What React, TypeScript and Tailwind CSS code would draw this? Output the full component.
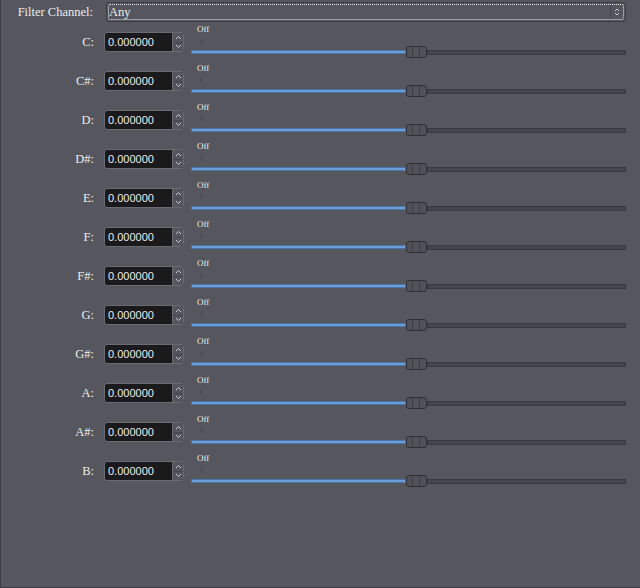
import React from "react";

const notes = ["C", "C#", "D", "D#", "E", "F", "F#", "G", "G#", "A", "A#", "B"];

function SpinBox() {
  return (
    <div className="flex h-[20px] w-[80px] overflow-hidden rounded-[3px] border border-[#6a6b72] bg-[#1a1a1c]">
      <div className="flex flex-1 items-center pl-[3px] text-[11px] leading-none text-[#ececec]" style={{ fontFamily: '"Liberation Sans", Arial, sans-serif' }}>
        0.000000
      </div>
      <div className="flex w-[11px] flex-col border-l border-[#6a6b72] bg-[#55565d]">
        <div className="flex flex-1 items-center justify-center border-b border-[#45464c]">
          <svg width="7" height="5" viewBox="0 0 7 5">
            <path d="M1 4 L3.5 1.5 L6 4" stroke="#c8c9cc" strokeWidth="1" fill="none" />
          </svg>
        </div>
        <div className="flex flex-1 items-center justify-center">
          <svg width="7" height="5" viewBox="0 0 7 5">
            <path d="M1 1 L3.5 3.5 L6 1" stroke="#c8c9cc" strokeWidth="1" fill="none" />
          </svg>
        </div>
      </div>
    </div>
  );
}

function Slider() {
  return (
    <div className="flex w-[435px] flex-col">
      <div className="ml-[6px] mt-[1px] h-[11px] text-[9px] leading-[11px] text-[#ececec]" style={{ fontFamily: '"Liberation Serif", serif' }}>
        Off
      </div>
      <div className="ml-[10px] mt-[3px] h-[6px] w-px bg-[#45464c]" />
      <div className="mt-[2px] flex h-[12px] items-center">
        <div className="h-[4px] w-[215px] border border-[#4a74a8] bg-[#6c9dd6]" />
        <div className="flex h-[12px] w-[21px] shrink-0 rounded-[3px] border border-[#2f3034] bg-[#515259]">
          <div className="w-[6px] border-r border-[#3c3d43]" />
          <div className="w-[7px] border-r border-[#3c3d43]" />
        </div>
        <div className="h-[5px] flex-1 border border-[#38393e] bg-[#45464d]" />
      </div>
    </div>
  );
}

export default function App() {
  return (
    <div
      className="h-[588px] w-[640px] border-b border-l border-[#3b3c42] bg-[#55565e] pt-[2px]"
      style={{ fontFamily: '"Liberation Serif", serif' }}
    >
      <div className="flex h-[20px] items-center">
        <div className="w-[92px] text-right text-[12.5px] text-[#ececec]">Filter Channel:</div>
        <div className="relative ml-[13px] flex h-[20px] w-[520px] items-center rounded-[3px] border border-[#3e3f45] bg-[#55565e]">
          <div className="absolute inset-[1px] rounded-[2px] border border-dotted border-[#e8e8e8]" />
          <div className="ml-[2px] flex-1 text-[12.5px] text-[#ececec]">Any</div>
          <div className="mr-[3px] flex h-[16px] w-[12px] items-center justify-center border-l border-[#46474d]">
            <svg width="6" height="8" viewBox="0 0 6 8">
              <path d="M1 3 L3 1 L5 3 M1 5 L3 7 L5 5" stroke="#c8c9cc" strokeWidth="1" fill="none" />
            </svg>
          </div>
        </div>
      </div>
      <div className="mt-[1px] flex flex-col">
        {notes.map((n) => (
          <div key={n} className="flex h-[39px] items-start">
            <div className="mt-[9px] h-[20px] w-[93px] text-right text-[12.5px] leading-[20px] text-[#ececec]">{n}:</div>
            <div className="ml-[10px] mt-[9px]">
              <SpinBox />
            </div>
            <div className="ml-[7px]">
              <Slider />
            </div>
          </div>
        ))}
      </div>
    </div>
  );
}
